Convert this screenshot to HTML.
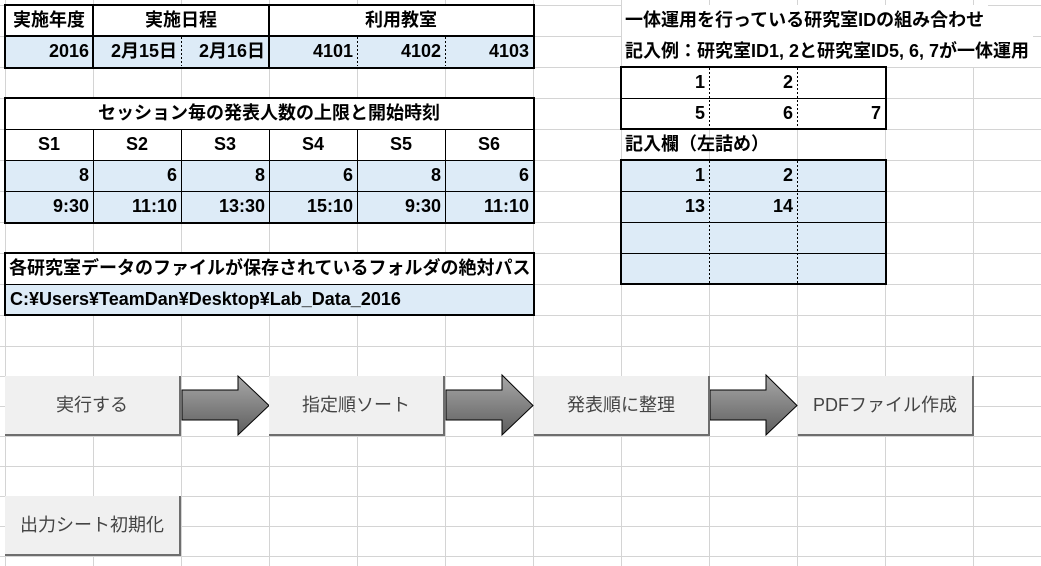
<!DOCTYPE html>
<html><head><meta charset="utf-8"><style>
body{margin:0;width:1041px;height:566px;background:#fff;position:relative;overflow:hidden;font-family:"Liberation Sans","Noto Sans CJK JP",sans-serif;}
.c{position:absolute;box-sizing:border-box;font-weight:bold;font-size:18px;color:#000;line-height:31px;white-space:nowrap;padding:0 4px;}
.b{background:#ddebf7;}
.r{text-align:right;}
.m{text-align:center;}
.tb{position:absolute;box-sizing:border-box;border:2px solid #000;}
.btn{position:absolute;box-sizing:border-box;background:#f0f0f0;border-right:2px solid #6e6e6e;border-bottom:2px solid #6e6e6e;font-size:18px;color:#444;text-align:center;font-family:"Liberation Sans","Noto Sans CJK JP",sans-serif;}
</style></head><body>
<svg width="1041" height="566" style="position:absolute;left:0;top:0">
<g stroke="#d4d4d4" stroke-width="1">
<line x1="5.5" y1="0" x2="5.5" y2="566"/><line x1="93.5" y1="0" x2="93.5" y2="566"/><line x1="181.5" y1="0" x2="181.5" y2="566"/><line x1="269.5" y1="0" x2="269.5" y2="566"/><line x1="357.5" y1="0" x2="357.5" y2="566"/><line x1="445.5" y1="0" x2="445.5" y2="566"/><line x1="533.5" y1="0" x2="533.5" y2="566"/><line x1="621.5" y1="0" x2="621.5" y2="566"/><line x1="709.5" y1="0" x2="709.5" y2="566"/><line x1="797.5" y1="0" x2="797.5" y2="566"/><line x1="885.5" y1="0" x2="885.5" y2="566"/><line x1="973.5" y1="0" x2="973.5" y2="566"/>
<line x1="0" y1="5.5" x2="1041" y2="5.5"/><line x1="0" y1="36.5" x2="1041" y2="36.5"/><line x1="0" y1="67.5" x2="1041" y2="67.5"/><line x1="0" y1="98.5" x2="1041" y2="98.5"/><line x1="0" y1="129.5" x2="1041" y2="129.5"/><line x1="0" y1="160.5" x2="1041" y2="160.5"/><line x1="0" y1="191.5" x2="1041" y2="191.5"/><line x1="0" y1="222.5" x2="1041" y2="222.5"/><line x1="0" y1="253.5" x2="1041" y2="253.5"/><line x1="0" y1="284.5" x2="1041" y2="284.5"/><line x1="0" y1="315.5" x2="1041" y2="315.5"/><line x1="0" y1="346.5" x2="1041" y2="346.5"/><line x1="0" y1="376.5" x2="1041" y2="376.5"/><line x1="0" y1="406.5" x2="1041" y2="406.5"/><line x1="0" y1="436.5" x2="1041" y2="436.5"/><line x1="0" y1="466.5" x2="1041" y2="466.5"/><line x1="0" y1="496.5" x2="1041" y2="496.5"/><line x1="0" y1="526.5" x2="1041" y2="526.5"/><line x1="0" y1="556.5" x2="1041" y2="556.5"/>
</g>
</svg>
<div class="c m" style="left:5px;top:5px;width:88px;height:31px;background:#fff">実施年度</div>
<div class="c m" style="left:93px;top:5px;width:176px;height:31px;background:#fff">実施日程</div>
<div class="c m" style="left:269px;top:5px;width:264px;height:31px;background:#fff">利用教室</div>
<div class="c b r" style="left:5px;top:36px;width:88px;height:31px">2016</div>
<div class="c b r" style="left:93px;top:36px;width:88px;height:31px">2月15日</div>
<div class="c b r" style="left:181px;top:36px;width:88px;height:31px">2月16日</div>
<div class="c b r" style="left:269px;top:36px;width:88px;height:31px">4101</div>
<div class="c b r" style="left:357px;top:36px;width:88px;height:31px">4102</div>
<div class="c b r" style="left:445px;top:36px;width:88px;height:31px">4103</div>
<div class="c m" style="left:5px;top:98px;width:528px;height:31px;background:#fff">セッション毎の発表人数の上限と開始時刻</div>
<div class="c m" style="left:5px;top:129px;width:88px;height:31px;background:#fff">S1</div>
<div class="c m" style="left:93px;top:129px;width:88px;height:31px;background:#fff">S2</div>
<div class="c m" style="left:181px;top:129px;width:88px;height:31px;background:#fff">S3</div>
<div class="c m" style="left:269px;top:129px;width:88px;height:31px;background:#fff">S4</div>
<div class="c m" style="left:357px;top:129px;width:88px;height:31px;background:#fff">S5</div>
<div class="c m" style="left:445px;top:129px;width:88px;height:31px;background:#fff">S6</div>
<div class="c b r" style="left:5px;top:160px;width:88px;height:31px">8</div>
<div class="c b r" style="left:93px;top:160px;width:88px;height:31px">6</div>
<div class="c b r" style="left:181px;top:160px;width:88px;height:31px">8</div>
<div class="c b r" style="left:269px;top:160px;width:88px;height:31px">6</div>
<div class="c b r" style="left:357px;top:160px;width:88px;height:31px">8</div>
<div class="c b r" style="left:445px;top:160px;width:88px;height:31px">6</div>
<div class="c b r" style="left:5px;top:191px;width:88px;height:31px">9:30</div>
<div class="c b r" style="left:93px;top:191px;width:88px;height:31px">11:10</div>
<div class="c b r" style="left:181px;top:191px;width:88px;height:31px">13:30</div>
<div class="c b r" style="left:269px;top:191px;width:88px;height:31px">15:10</div>
<div class="c b r" style="left:357px;top:191px;width:88px;height:31px">9:30</div>
<div class="c b r" style="left:445px;top:191px;width:88px;height:31px">11:10</div>
<div class="c" style="left:5px;top:253px;width:528px;height:31px;background:#fff;padding-left:4px">各研究室データのファイルが保存されているフォルダの絶対パス</div>
<div class="c b" style="left:5px;top:284px;width:528px;height:31px;padding-left:5px">C:¥Users¥TeamDan¥Desktop¥Lab_Data_2016</div>
<div class="c" style="left:622px;top:5px;height:31px;background:#fff;padding-left:3px">一体運用を行っている研究室IDの組み合わせ</div>
<div class="c" style="left:622px;top:36px;height:31px;background:#fff;padding-left:3px">記入例：研究室ID1, 2と研究室ID5, 6, 7が一体運用</div>
<div class="c r" style="left:621px;top:67px;width:88px;height:31px;background:#fff">1</div>
<div class="c r" style="left:709px;top:67px;width:88px;height:31px;background:#fff">2</div>
<div class="c r" style="left:797px;top:67px;width:88px;height:31px;background:#fff"></div>
<div class="c r" style="left:621px;top:98px;width:88px;height:31px;background:#fff">5</div>
<div class="c r" style="left:709px;top:98px;width:88px;height:31px;background:#fff">6</div>
<div class="c r" style="left:797px;top:98px;width:88px;height:31px;background:#fff">7</div>
<div class="c" style="left:622px;top:129px;height:31px;padding-left:3px">記入欄（左詰め）</div>
<div class="c b" style="left:621px;top:160px;width:264px;height:124px"></div>
<div class="c r" style="left:621px;top:160px;width:88px;height:31px">1</div>
<div class="c r" style="left:709px;top:160px;width:88px;height:31px">2</div>
<div class="c r" style="left:621px;top:191px;width:88px;height:31px">13</div>
<div class="c r" style="left:709px;top:191px;width:88px;height:31px">14</div>
<svg width="1041" height="566" style="position:absolute;left:0;top:0">
<g stroke="#000" stroke-width="1">
<line x1="5" y1="129.5" x2="533" y2="129.5"/><line x1="5" y1="160.5" x2="533" y2="160.5"/><line x1="5" y1="191.5" x2="533" y2="191.5"/>
<line x1="93.5" y1="129" x2="93.5" y2="222"/><line x1="181.5" y1="129" x2="181.5" y2="222"/><line x1="269.5" y1="129" x2="269.5" y2="222"/><line x1="357.5" y1="129" x2="357.5" y2="222"/><line x1="445.5" y1="129" x2="445.5" y2="222"/>
<line x1="5" y1="36" x2="533" y2="36" stroke-width="2"/>
<line x1="93" y1="5" x2="93" y2="67" stroke-width="2"/><line x1="269" y1="5" x2="269" y2="67" stroke-width="2"/>
<line x1="5" y1="284.5" x2="533" y2="284.5"/>
<line x1="621" y1="98.5" x2="885" y2="98.5"/>
<line x1="621" y1="191.5" x2="885" y2="191.5"/><line x1="621" y1="222.5" x2="885" y2="222.5"/><line x1="621" y1="253.5" x2="885" y2="253.5"/>
</g>
<g stroke="#000" stroke-width="1" stroke-dasharray="2,2">
<line x1="181.5" y1="37" x2="181.5" y2="66"/><line x1="357.5" y1="37" x2="357.5" y2="66"/><line x1="445.5" y1="37" x2="445.5" y2="66"/>
<line x1="709.5" y1="68" x2="709.5" y2="128"/><line x1="797.5" y1="68" x2="797.5" y2="128"/>
<line x1="709.5" y1="161" x2="709.5" y2="283"/><line x1="797.5" y1="161" x2="797.5" y2="283"/>
</g>
<defs><linearGradient id="g" x1="0" y1="0" x2="0" y2="1"><stop offset="0" stop-color="#a8a8a8"/><stop offset="1" stop-color="#5e5e5e"/></linearGradient></defs>
<path d="M182 390 L238 390 L238 376 L269 405.5 L238 435 L238 420 L182 420 Z" fill="url(#g)" stroke="#000" stroke-width="1"/>
<path d="M446 390 L502 390 L502 375 L533 405.5 L502 435 L502 420 L446 420 Z" fill="url(#g)" stroke="#000" stroke-width="1"/>
<path d="M710 390 L766 390 L766 375 L797 405.5 L766 435 L766 420 L710 420 Z" fill="url(#g)" stroke="#000" stroke-width="1"/>
</svg>
<div class="tb" style="left:4px;top:4px;width:531px;height:65px"></div>
<div class="tb" style="left:4px;top:97px;width:531px;height:127px"></div>
<div class="tb" style="left:4px;top:252px;width:531px;height:64px"></div>
<div class="tb" style="left:620px;top:66px;width:267px;height:64px"></div>
<div class="tb" style="left:620px;top:159px;width:267px;height:126px"></div>
<div class="btn" style="left:5px;top:376px;width:176px;height:60px;line-height:58px">実行する</div>
<div class="btn" style="left:269px;top:376px;width:176px;height:60px;line-height:58px">指定順ソート</div>
<div class="btn" style="left:534px;top:376px;width:176px;height:60px;line-height:58px">発表順に整理</div>
<div class="btn" style="left:798px;top:376px;width:176px;height:60px;line-height:58px">PDFファイル作成</div>
<div class="btn" style="left:5px;top:496px;width:176px;height:60px;line-height:58px">出力シート初期化</div>
</body></html>
